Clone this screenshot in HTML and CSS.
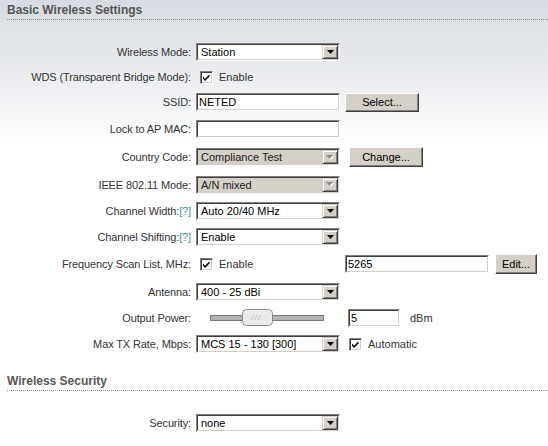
FILE: index.html
```html
<!DOCTYPE html>
<html>
<head>
<meta charset="utf-8">
<link rel="stylesheet" href="styles.css">
</head>
<body>
<div class="page">
  <h2 class="section-title">Basic Wireless Settings</h2>
  <div class="form">
    <div class="row">
      <div class="label">Wireless Mode:</div>
      <div class="field">
        <div class="select"><div class="select-in"><span class="select-text">Station</span><span class="drop"><svg width="7" height="4" viewBox="0 0 7 4"><path d="M0 0h7l-3.5 4z" fill="#000"/></svg></span></div></div>
      </div>
    </div>
    <div class="row row-24">
      <div class="label">WDS (Transparent Bridge Mode):</div>
      <div class="field">
        <span class="check check-first"><svg width="9" height="9" viewBox="0 0 9 9"><path d="M1 3.5l2 2.2l4.5-4.5v2.2l-4.5 4.5l-2-2.2z" fill="#000"/></svg></span>
        <span class="check-label">Enable</span>
      </div>
    </div>
    <div class="row row-26">
      <div class="label">SSID:</div>
      <div class="field">
        <div class="input"><div class="input-in">NETED</div></div>
        <div class="btn btn-select">Select...</div>
      </div>
    </div>
    <div class="row row-28">
      <div class="label">Lock to AP MAC:</div>
      <div class="field">
        <div class="input"><div class="input-in"></div></div>
      </div>
    </div>
    <div class="row row-28">
      <div class="label">Country Code:</div>
      <div class="field">
        <div class="select"><div class="select-in disabled"><span class="select-text">Compliance Test</span><span class="drop"><svg width="8" height="5" viewBox="0 0 8 5"><path d="M1 1h7l-3.5 4z" fill="#fff"/><path d="M0 0h7l-3.5 4z" fill="#8a8a8a"/></svg></span></div></div>
        <div class="btn btn-change">Change...</div>
      </div>
    </div>
    <div class="row">
      <div class="label">IEEE 802.11 Mode:</div>
      <div class="field">
        <div class="select"><div class="select-in disabled"><span class="select-text">A/N mixed</span><span class="drop"><svg width="8" height="5" viewBox="0 0 8 5"><path d="M1 1h7l-3.5 4z" fill="#fff"/><path d="M0 0h7l-3.5 4z" fill="#8a8a8a"/></svg></span></div></div>
      </div>
    </div>
    <div class="row row-26">
      <div class="label">Channel Width:<span class="help">[?]</span></div>
      <div class="field">
        <div class="select"><div class="select-in"><span class="select-text">Auto 20/40 MHz</span><span class="drop"><svg width="7" height="4" viewBox="0 0 7 4"><path d="M0 0h7l-3.5 4z" fill="#000"/></svg></span></div></div>
      </div>
    </div>
    <div class="row row-26">
      <div class="label">Channel Shifting:<span class="help">[?]</span></div>
      <div class="field">
        <div class="select"><div class="select-in"><span class="select-text">Enable</span><span class="drop"><svg width="7" height="4" viewBox="0 0 7 4"><path d="M0 0h7l-3.5 4z" fill="#000"/></svg></span></div></div>
      </div>
    </div>
    <div class="row row-28">
      <div class="label">Frequency Scan List, MHz:</div>
      <div class="field">
        <span class="check check-first"><svg width="9" height="9" viewBox="0 0 9 9"><path d="M1 3.5l2 2.2l4.5-4.5v2.2l-4.5 4.5l-2-2.2z" fill="#000"/></svg></span>
        <span class="check-label freq-enable">Enable</span>
        <div class="input input-freq"><div class="input-in">5265</div></div>
        <div class="btn btn-edit">Edit...</div>
      </div>
    </div>
    <div class="row">
      <div class="label">Antenna:</div>
      <div class="field">
        <div class="select"><div class="select-in"><span class="select-text">400 - 25 dBi</span><span class="drop"><svg width="7" height="4" viewBox="0 0 7 4"><path d="M0 0h7l-3.5 4z" fill="#000"/></svg></span></div></div>
      </div>
    </div>
    <div class="row row-25">
      <div class="label">Output Power:</div>
      <div class="field">
        <svg class="slider" width="114" height="17" viewBox="0 0 114 17">
          <rect x="0.5" y="6.5" width="113" height="5" fill="#b4b4b4" stroke="#7a7a7a"/>
          <rect x="32.5" y="0.5" width="30" height="16" rx="4" fill="#ebebeb" stroke="#8c8c8c"/>
          <path d="M41 11l3-5M44.5 11l3-5M48 11l3-5" stroke="#c2c2c2" stroke-width="1"/>
        </svg>
        <div class="input input-power"><div class="input-in">5</div></div>
        <span class="unit">dBm</span>
      </div>
    </div>
    <div class="row row-28">
      <div class="label">Max TX Rate, Mbps:</div>
      <div class="field">
        <div class="select"><div class="select-in"><span class="select-text">MCS 15 - 130 [300]</span><span class="drop"><svg width="7" height="4" viewBox="0 0 7 4"><path d="M0 0h7l-3.5 4z" fill="#000"/></svg></span></div></div>
        <span class="check check-auto"><svg width="9" height="9" viewBox="0 0 9 9"><path d="M1 3.5l2 2.2l4.5-4.5v2.2l-4.5 4.5l-2-2.2z" fill="#000"/></svg></span>
        <span class="check-label">Automatic</span>
      </div>
    </div>
  </div>

  <h2 class="section-title section-second">Wireless Security</h2>
  <div class="form">
    <div class="row">
      <div class="label">Security:</div>
      <div class="field">
        <div class="select"><div class="select-in"><span class="select-text">none</span><span class="drop"><svg width="7" height="4" viewBox="0 0 7 4"><path d="M0 0h7l-3.5 4z" fill="#000"/></svg></span></div></div>
      </div>
    </div>
  </div>
</div>
</body>
</html>
```

FILE: styles.css
```css
html, body {
  margin: 0;
  padding: 0;
}

body {
  width: 548px;
  height: 446px;
  overflow: hidden;
  background: linear-gradient(to bottom, #d7dae0 0px, #eceef1 80px, #ffffff 150px, #ffffff 100%);
  font-family: "Liberation Sans", Arial, sans-serif;
  font-size: 11px;
  color: #333;
}

.page {
  display: flex;
  flex-direction: column;
}

.section-title {
  margin: 0 0 18px 7px;
  padding: 3px 0 2px;
  font-size: 12px;
  line-height: 14px;
  font-weight: bold;
  color: #575757;
  border-bottom: 1px dotted #8c8c8c;
}

.section-second {
  margin-top: 13px;
}

.form {
  display: flex;
  flex-direction: column;
}

.row {
  display: flex;
  align-items: center;
  height: 27px;
}

.row-24 { height: 24px; }
.row-25 { height: 25px; }
.row-26 { height: 26px; }
.row-28 { height: 28px; }

.label {
  width: 191px;
  flex-shrink: 0;
  margin-right: 5px;
  text-align: right;
  white-space: nowrap;
  letter-spacing: -0.12px;
  color: #333;
}

.help {
  color: #3f8cc6;
}

.field {
  display: flex;
  align-items: center;
  white-space: nowrap;
}

/* sunken 3D frame shared by select / input */
.select, .input {
  box-sizing: border-box;
  width: 144px;
  height: 18px;
  border: 1px solid;
  border-color: #808080 #ffffff #ffffff #808080;
  flex-shrink: 0;
}

.select-in, .input-in {
  box-sizing: border-box;
  height: 100%;
  border: 1px solid;
  border-color: #404040 #d4d0c8 #d4d0c8 #404040;
  background: #fff;
  color: #000;
}

.select-in {
  display: flex;
  align-items: center;
}

.select-in.disabled {
  background: #d4d0c8;
  color: #222;
}

.select-text {
  flex: 1;
  padding-left: 3px;
  line-height: 14px;
  overflow: hidden;
}

.drop {
  box-sizing: border-box;
  width: 16px;
  height: 14px;
  display: flex;
  align-items: center;
  justify-content: center;
  background: #d4d0c8;
  border: 1px solid;
  border-color: #d4d0c8 #404040 #404040 #d4d0c8;
  box-shadow: inset 1px 1px 0 #ffffff, inset -1px -1px 0 #808080;
}

.input-in {
  padding-left: 1px;
  line-height: 14px;
}

.input-freq {
  margin-left: 5px;
}

.input-power {
  width: 52px;
  margin-left: 24px;
}

.unit {
  margin-left: 10px;
  color: #333;
}

.btn {
  box-sizing: border-box;
  height: 19px;
  display: flex;
  align-items: center;
  justify-content: center;
  background: #d4d0c8;
  border: 1px solid;
  border-color: #ffffff #404040 #404040 #ffffff;
  box-shadow: inset -1px -1px 0 #808080;
  color: #000;
  flex-shrink: 0;
}

.btn-select {
  width: 74px;
  margin-left: 5px;
}

.btn-change {
  width: 74px;
  height: 20px;
  margin-left: 9px;
}

.btn-edit {
  width: 42px;
  height: 20px;
  margin-left: 6px;
}

.check {
  box-sizing: border-box;
  width: 13px;
  height: 13px;
  display: inline-flex;
  align-items: center;
  justify-content: center;
  background: #fff;
  border: 1px solid;
  border-color: #808080 #ffffff #ffffff #808080;
  box-shadow: inset 1px 1px 0 #404040, inset -1px -1px 0 #d4d0c8;
  flex-shrink: 0;
}

.check svg {
  display: block;
}

.check-first {
  margin-left: 4px;
}

.check-auto {
  margin-left: 9px;
}

.check-label {
  margin-left: 6px;
  color: #333;
}

.freq-enable {
  width: 121px;
}

.slider {
  display: block;
  margin-left: 14px;
}
```
